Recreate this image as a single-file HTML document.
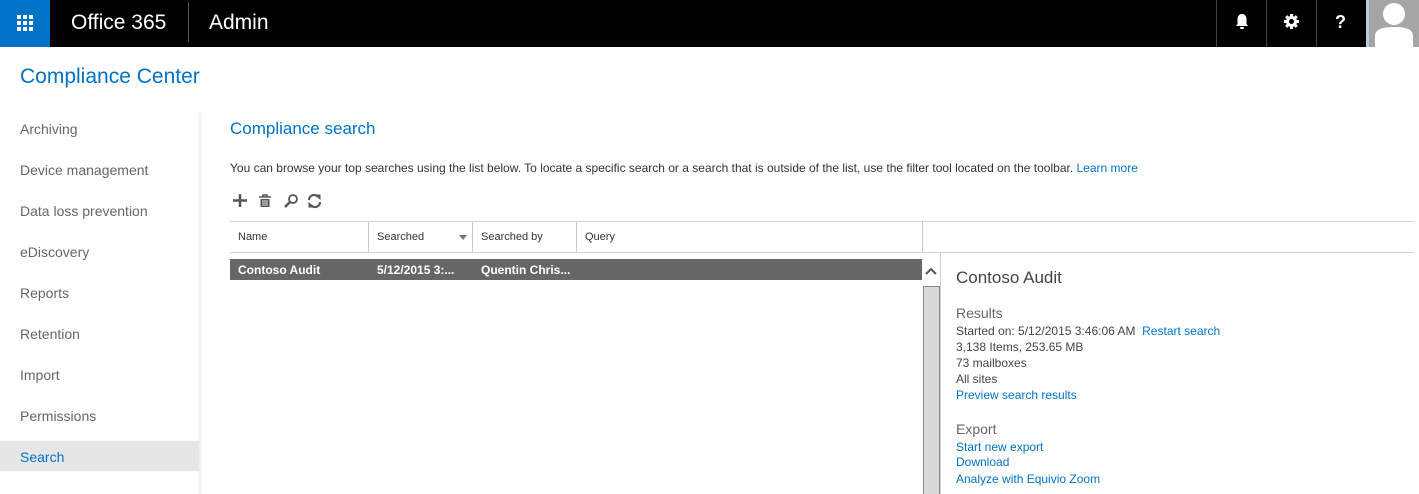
<!DOCTYPE html>
<html><head><meta charset="utf-8"><style>
*{margin:0;padding:0;box-sizing:border-box}
body{width:1419px;height:494px;overflow:hidden;background:#fff;font-family:"Segoe UI","Liberation Sans",sans-serif;position:relative;color:#333}
.a{position:absolute;white-space:nowrap}
.top{left:0;top:0;width:1419px;height:47px;background:#000}
.blue{color:#0072c6}
.nav{left:20px;font-size:14px;color:#666}
.hd{font-size:11px;color:#333;top:231px}
.vd{position:absolute;width:1px;background:#c8c8c8}
.det{left:956px;font-size:12px;color:#444}
</style></head><body>
<div class="a top"></div>
<div class="a" style="left:0;top:0;width:50px;height:47px;background:#0072c6"></div>
<svg class="a" style="left:17px;top:15px" width="16" height="16"><g fill="#fff">
<rect x="0" y="0" width="4" height="4"/><rect x="6" y="0" width="4" height="4"/><rect x="12" y="0" width="4" height="4"/>
<rect x="0" y="6" width="4" height="4"/><rect x="6" y="6" width="4" height="4"/><rect x="12" y="6" width="4" height="4"/>
<rect x="0" y="12" width="4" height="4"/><rect x="6" y="12" width="4" height="4"/><rect x="12" y="12" width="4" height="4"/></g></svg>
<div class="a" style="left:71px;top:11px;font-size:21px;color:#fff">Office 365</div>
<div class="a" style="left:188px;top:2px;width:1px;height:40px;background:#555"></div>
<div class="a" style="left:209px;top:11px;font-size:21px;color:#fff">Admin</div>
<div class="a" style="left:1216px;top:0;width:1px;height:47px;background:#444"></div>
<div class="a" style="left:1266px;top:0;width:1px;height:47px;background:#444"></div>
<div class="a" style="left:1316px;top:0;width:1px;height:47px;background:#444"></div>
<svg class="a" style="left:1234px;top:13px" width="16" height="18"><path d="M8 1c-3 0-4.5 2.5-4.5 5v5L2 13h12l-1.5-2V6C12.5 3.5 11 1 8 1z" fill="#fff"/><rect x="6" y="14" width="4" height="2" rx="1" fill="#fff"/></svg>
<svg class="a" style="left:1283px;top:13px" width="17" height="17" viewBox="0 0 17 17"><g fill="#fff"><circle cx="8.5" cy="8.5" r="5.5"/><rect x="7" y="1" width="3" height="15"/><rect x="1" y="7" width="15" height="3"/><rect x="7" y="1" width="3" height="15" transform="rotate(45 8.5 8.5)"/><rect x="7" y="1" width="3" height="15" transform="rotate(-45 8.5 8.5)"/></g><circle cx="8.5" cy="8.5" r="2.5" fill="#000"/></svg>
<div class="a" style="left:1335px;top:12px;font-size:18px;font-weight:bold;color:#fff;font-family:'Liberation Sans'">?</div>
<div class="a" style="left:1366px;top:0;width:53px;height:47px;background:#a5a5a5;border-left:3px solid #b8ccd6"></div>
<svg class="a" style="left:1369px;top:0" width="50" height="47"><circle cx="25" cy="14" r="11" fill="#fff"/><path d="M6 47V36c0-6 6-9 19-9s19 3 19 9v11z" fill="#fff"/></svg>

<div class="a blue" style="left:20px;top:65px;font-size:21px">Compliance Center</div>
<div class="a" style="left:199px;top:113px;width:2px;height:381px;background:#f0f0f0"></div>
<div class="a" style="left:0;top:441px;width:199px;height:30px;background:#e6e6e6"></div>
<div class="a nav" style="top:121px">Archiving</div>
<div class="a nav" style="top:162px">Device management</div>
<div class="a nav" style="top:203px">Data loss prevention</div>
<div class="a nav" style="top:244px">eDiscovery</div>
<div class="a nav" style="top:285px">Reports</div>
<div class="a nav" style="top:326px">Retention</div>
<div class="a nav" style="top:367px">Import</div>
<div class="a nav" style="top:408px">Permissions</div>
<div class="a nav" style="top:449px;color:#0072c6">Search</div>

<div class="a blue" style="left:230px;top:119px;font-size:17px">Compliance search</div>
<div class="a" style="left:230px;top:161px;font-size:12px;color:#333">You can browse your top searches using the list below. To locate a specific search or a search that is outside of the list, use the filter tool located on the toolbar. <span class="blue">Learn more</span></div>
<svg class="a" style="left:232px;top:193px" width="100" height="16"><g fill="#555" stroke="#555">
<path d="M1 7.5h14M8 1v13" stroke-width="2.5" fill="none"/>
<path d="M27 4h12M31 4V2h4v2" stroke-width="1.5" fill="none"/><rect x="28.5" y="6" width="9" height="8" stroke="none"/><path d="M31 7v6M33 7v6M35 7v6" stroke="#fff" stroke-width="0.8"/>
<circle cx="61" cy="6" r="4" fill="none" stroke-width="1.8"/><path d="M58 9l-5 5" stroke-width="2.5"/>
<path d="M77 7a5 5 0 0 1 9-3M88 9a5 5 0 0 1-9 3" fill="none" stroke-width="2.2"/><path d="M84 2l4 0 0 4z M81 14l-4 0 0-4z" stroke-width="1"/></g></svg>
<div class="a" style="left:230px;top:221px;width:1184px;height:1px;background:#d4d4d4"></div>
<div class="a" style="left:230px;top:252px;width:1184px;height:1px;background:#d4d4d4"></div>
<div class="vd" style="left:368px;top:222px;height:30px"></div>
<div class="vd" style="left:472px;top:222px;height:30px"></div>
<div class="vd" style="left:576px;top:222px;height:30px"></div>
<div class="vd" style="left:922px;top:222px;height:30px"></div>
<div class="a hd" style="left:238px">Name</div>
<div class="a hd" style="left:377px">Searched</div>
<div class="a" style="left:459px;top:235px;width:0;height:0;border-left:4px solid transparent;border-right:4px solid transparent;border-top:5px solid #777"></div>
<div class="a hd" style="left:481px">Searched by</div>
<div class="a hd" style="left:585px">Query</div>
<div class="a" style="left:230px;top:259px;width:692px;height:21px;background:#666"></div>
<div class="a" style="left:238px;top:263px;font-size:12px;font-weight:bold;color:#fff">Contoso Audit</div>
<div class="a" style="left:377px;top:263px;font-size:12px;font-weight:bold;color:#fff">5/12/2015 3:...</div>
<div class="a" style="left:481px;top:263px;font-size:12px;font-weight:bold;color:#fff">Quentin Chris...</div>
<svg class="a" style="left:924px;top:266px" width="14" height="10"><path d="M2 8l5-5 5 5" stroke="#555" stroke-width="2" fill="none"/></svg>
<div class="a" style="left:923px;top:286px;width:17px;height:208px;background:#d9d9d9;border:1px solid #888;border-bottom:none"></div>
<div class="a" style="left:940px;top:253px;width:1px;height:241px;background:#d4d4d4"></div>

<div class="a" style="left:956px;top:268px;font-size:17px;color:#444">Contoso Audit</div>
<div class="a det" style="top:305px;font-size:14px;color:#666">Results</div>
<div class="a det" style="top:324px">Started on: 5/12/2015 3:46:06 AM&nbsp; <span class="blue">Restart search</span></div>
<div class="a det" style="top:340px">3,138 Items, 253.65 MB</div>
<div class="a det" style="top:356px">73 mailboxes</div>
<div class="a det" style="top:372px">All sites</div>
<div class="a det" style="top:388px;color:#0072c6">Preview search results</div>
<div class="a det" style="top:421px;font-size:14px;color:#666">Export</div>
<div class="a det" style="top:440px;color:#0072c6">Start new export</div>
<div class="a det" style="top:455px;color:#0072c6">Download</div>
<div class="a det" style="top:472px;color:#0072c6">Analyze with Equivio Zoom</div>
</body></html>
